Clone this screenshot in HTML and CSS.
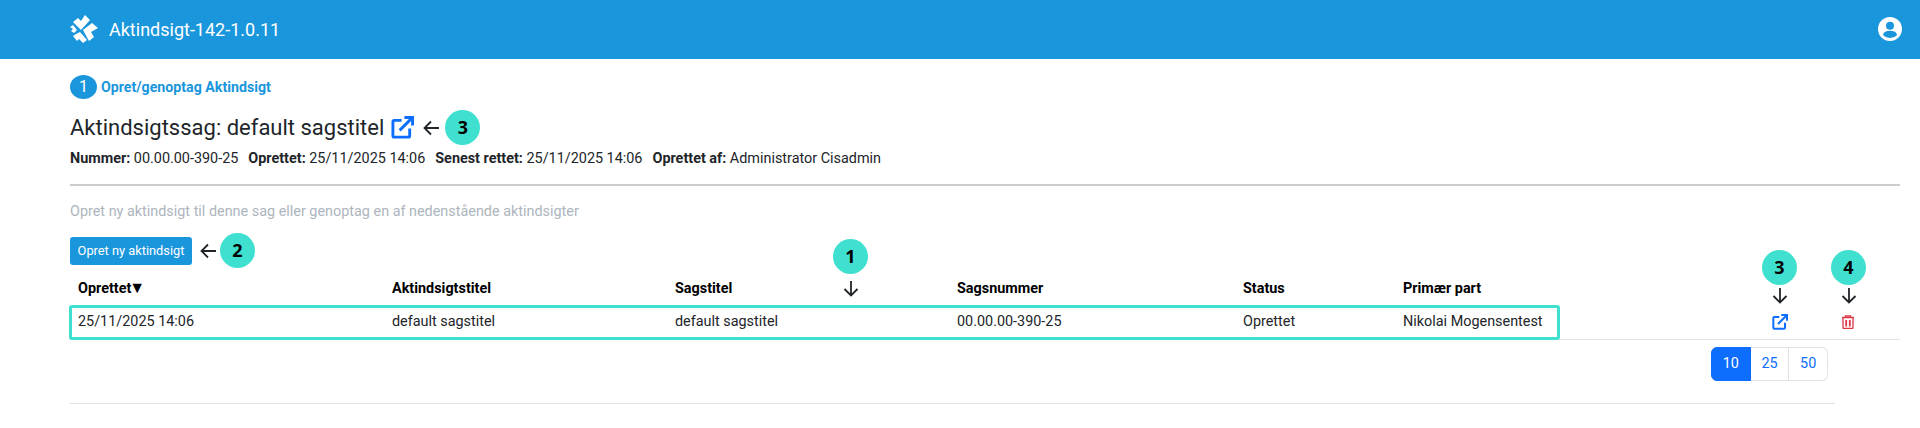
FILE: index.html
```html
<!DOCTYPE html>
<html lang="da">
<head>
    <meta charset="UTF-8">
    <title>Aktindsigt</title>
    <link rel="stylesheet" href="styles.css">
</head>
<body>
    <header class="topbar">
        <div class="brand">
            <svg class="brand-logo" viewBox="0 0 28 28" aria-hidden="true">
                <polygon points="3,7 8,3 11,6 15,0 20,5 11,15"/>
                <polygon points="13,15 22,8 28,13 21,17 24,22 19,26"/>
                <polygon points="10,17 17,25 13,28 9,24 7,26 3,21 6,19"/>
                <polygon points="0,12 3,10 7,15 4,18 1,16 3,14"/>
            </svg>
            <span class="brand-name">Aktindsigt-142-1.0.11</span>
        </div>
        <svg class="user-icon" viewBox="0 0 24 24" aria-hidden="true">
            <circle cx="12" cy="12" r="12" fill="#fff"/>
            <circle cx="12" cy="8.800" r="4" fill="#1a96dc"/>
            <ellipse cx="12" cy="17.300" rx="6.800" ry="3.600" fill="#1a96dc"/>
        </svg>
    </header>

    <main class="content">
        <div class="step">
            <span class="step-no">1</span>
            <span class="step-label">Opret/genoptag Aktindsigt</span>
        </div>

        <div class="case-title">
            <h1>Aktindsigtssag: default sagstitel</h1>
            <svg class="edit-icon edit-large" viewBox="0 0 24 24" aria-hidden="true">
                <path d="M11 4.500H3.500A1.500 1.500 0 0 0 2 6V20.500A1.500 1.500 0 0 0 3.500 22H18A1.500 1.500 0 0 0 19.500 20.500V13"/>
                <path d="M9 15L21 3"/>
                <path d="M14 1.500H22.500V10"/>
            </svg>
            <svg class="arrow" viewBox="0 0 16 16" aria-hidden="true"><path d="M16 8H1.500M8 1.500L1.500 8L8 14.500"/></svg>
            <span class="badge">3</span>
        </div>

        <p class="meta">
            <span><b>Nummer:</b> 00.00.00-390-25</span>
            <span><b>Oprettet:</b> 25/11/2025 14:06</span>
            <span><b>Senest rettet:</b> 25/11/2025 14:06</span>
            <span><b>Oprettet af:</b> Administrator Cisadmin</span>
        </p>

        <hr class="rule rule-top">

        <p class="hint">Opret ny aktindsigt til denne sag eller genoptag en af nedenstående aktindsigter</p>

        <div class="create-row">
            <button class="create-btn" type="button">Opret ny aktindsigt</button>
            <svg class="arrow" viewBox="0 0 16 16" aria-hidden="true"><path d="M16 8H1.500M8 1.500L1.500 8L8 14.500"/></svg>
            <span class="badge">2</span>
        </div>

        <div class="table">
            <div class="row row-head">
                <div>Oprettet<span class="sort">▼</span></div>
                <div>Aktindsigtstitel</div>
                <div>Sagstitel</div>
                <div>Sagsnummer</div>
                <div>Status</div>
                <div>Primær part</div>
                <div></div>
                <div></div>
                <div></div>
            </div>
            <div class="row row-body">
                <div>25/11/2025 14:06</div>
                <div>default sagstitel</div>
                <div>default sagstitel</div>
                <div>00.00.00-390-25</div>
                <div>Oprettet</div>
                <div>Nikolai Mogensentest</div>
                <div></div>
                <div class="cell-icon">
                    <svg class="edit-icon" viewBox="0 0 24 24" aria-hidden="true">
                        <path d="M11 4.500H3.500A1.500 1.500 0 0 0 2 6V20.500A1.500 1.500 0 0 0 3.500 22H18A1.500 1.500 0 0 0 19.500 20.500V13"/>
                        <path d="M9 15L21 3"/>
                        <path d="M14 1.500H22.500V10"/>
                    </svg>
                </div>
                <div class="cell-icon">
                    <svg class="trash-icon" viewBox="0 0 12 14" aria-hidden="true">
                        <path d="M0 2.500H12M3.500 2.500V0.800H8.500V2.500M1 2.500V12.500A1 1 0 0 0 2 13.500H10A1 1 0 0 0 11 12.500V2.500"/>
                        <path class="trash-bars" d="M4.200 5V11.500M7.800 5V11.500"/>
                    </svg>
                </div>
            </div>

            <!-- annotations drawn on top of the table -->
            <div class="row-mark"></div>
            <div class="note note-col"><span class="badge">1</span><svg class="arrow" viewBox="0 0 16 16" aria-hidden="true"><path d="M8 0V14.500M1.500 8L8 14.500L14.500 8"/></svg></div>
            <div class="note note-edit"><span class="badge">3</span><svg class="arrow" viewBox="0 0 16 16" aria-hidden="true"><path d="M8 0V14.500M1.500 8L8 14.500L14.500 8"/></svg></div>
            <div class="note note-delete"><span class="badge">4</span><svg class="arrow" viewBox="0 0 16 16" aria-hidden="true"><path d="M8 0V14.500M1.500 8L8 14.500L14.500 8"/></svg></div>
        </div>

        <div class="pager">
            <span class="page page-on">10</span>
            <span class="page">25</span>
            <span class="page">50</span>
        </div>

        <hr class="rule rule-bottom">
    </main>
</body>
</html>
```

FILE: styles.css
```css
body {
    font-family: 'Roboto', sans-serif;
    font-size: 14.400px;
    line-height: 1.5;
    margin: 0;
    background-color: #fff;
    color: #212529;
    height: 428px;
    overflow: hidden;
}
.topbar {
    display: flex;
    align-items: center;
    justify-content: space-between;
    height: 59px;
    padding: 0 18px 1px 70px;
    box-sizing: border-box;
    background-color: #1a96dc;
    color: #fff;
}
.brand {
    display: flex;
    align-items: center;
    gap: 11px;
}
.brand-logo {
    width: 28px;
    height: 28px;
    fill: #fff;
}
.brand-name {
    font-size: 18px;
}
.user-icon {
    width: 24px;
    height: 24px;
}
.content {
    padding: 16px 20px 0 70px;
}
.step {
    display: flex;
    align-items: center;
    gap: 4px;
    height: 24px;
}
.step-no {
    width: 27px;
    height: 24px;
    border-radius: 50%;
    background-color: #1a96dc;
    color: #fff;
    font-size: 16px;
    line-height: 24px;
    text-align: center;
}
.step-label {
    padding-top: 2px;
    font-size: 14.200px;
    font-weight: 700;
    color: #1a96dc;
}
.case-title {
    display: flex;
    align-items: center;
    height: 35px;
    margin-top: 11px;
}
h1 {
    margin: 0;
    font-size: 22px;
    font-weight: 400;
    line-height: 35px;
}
.edit-icon {
    fill: none;
    stroke: #0d6efd;
    stroke-width: 3;
    width: 16px;
    height: 16px;
}
.edit-large {
    width: 23px;
    height: 23px;
    margin-left: 7px;
    margin-right: 9px;
}
.arrow {
    flex: none;
    width: 16px;
    height: 16px;
    fill: none;
    stroke: #212529;
    stroke-width: 1.800;
}
.badge {
    display: block;
    flex: none;
    width: 35px;
    height: 35px;
    border-radius: 50%;
    background-color: #40e0d0;
    color: #000;
    font-family: 'Open Sans', sans-serif;
    font-size: 18px;
    font-weight: 700;
    line-height: 35px;
    text-align: center;
}
.case-title .badge {
    margin-left: 6px;
}
.meta {
    display: flex;
    gap: 10px;
    margin: 3px 0 0;
    height: 21px;
    line-height: 21px;
}
.rule {
    margin: 0;
    border: 0;
    height: 2px;
    background-color: #ccc;
}
.rule-top {
    margin-top: 15px;
}
.hint {
    margin: 15px 0 0;
    color: #adb5bd;
    line-height: 21px;
}
.create-row {
    display: flex;
    align-items: center;
    height: 35px;
    margin-top: 11px;
}
.create-btn {
    width: 122px;
    height: 28px;
    padding: 0;
    border: 0;
    border-radius: 3px;
    background-color: #1a96dc;
    color: #fff;
    font-family: inherit;
    font-size: 12.800px;
    margin-right: 8px;
}
.create-row .badge {
    margin-left: 4px;
}
.table {
    position: relative;
    margin-top: 4px;
}
.row {
    display: grid;
    grid-template-columns: 314px 283px 282px 286px 160px 164px 188px 66px 70px;
    align-items: center;
}
.row > div {
    padding-left: 8px;
}
.row-head {
    height: 34px;
    font-weight: 700;
    color: #000;
}
.sort {
    font-size: 16px;
    line-height: 1;
    margin-left: -2px;
}
.row-body {
    height: 31px;
    padding-bottom: 2px;
    border-bottom: 1px solid #dee2e6;
    color: #212529;
}
.row .cell-icon {
    display: flex;
    justify-content: center;
    padding: 0;
}
.trash-icon {
    width: 12px;
    height: 14px;
    fill: none;
    stroke: #dc3545;
    stroke-width: 1.300;
}
.trash-bars {
    stroke-width: 1.800;
}
.row-mark {
    position: absolute;
    left: -1px;
    top: 33px;
    width: 1485px;
    height: 29px;
    border: 3px solid #40e0d0;
    border-radius: 3px;
}
.note {
    position: absolute;
    display: flex;
    flex-direction: column;
    align-items: center;
    gap: 3px;
    width: 35px;
}
.note-col {
    left: 763px;
    top: -33px;
    gap: 7px;
}
.note-edit {
    left: 1692px;
    top: -22px;
}
.note-delete {
    left: 1761px;
    top: -22px;
}
.pager {
    display: flex;
    width: 117px;
    height: 34px;
    margin: 7px 0 0 1641px;
}
.page {
    flex: 1;
    border: 1px solid #dee2e6;
    border-left-width: 0;
    color: #0d6efd;
    line-height: 32px;
    text-align: center;
}
.page:last-child {
    border-radius: 0 6px 6px 0;
}
.page-on {
    border: 1px solid #0d6efd;
    border-radius: 6px 0 0 6px;
    background-color: #0d6efd;
    color: #fff;
}
.rule-bottom {
    margin-top: 22px;
    width: 1765px;
    height: 1px;
    background-color: #dee2e6;
}
```
